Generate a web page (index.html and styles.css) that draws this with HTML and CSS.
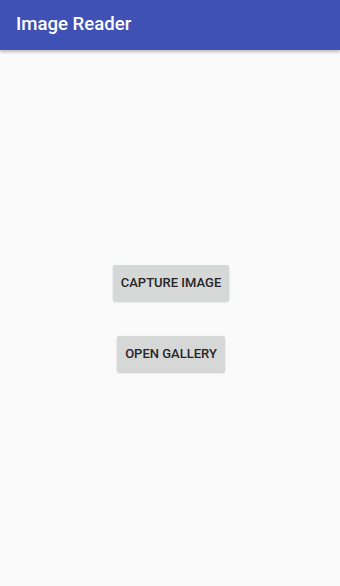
FILE: index.html
```html
<!DOCTYPE html>
<html>
<head>
<meta charset="utf-8">
<link rel="stylesheet" href="styles.css">
</head>
<body>
<div class="app">
  <header class="appbar"><span class="title">Image Reader</span></header>
  <main class="content">
    <button class="btn">CAPTURE IMAGE</button>
    <button class="btn">OPEN GALLERY</button>
  </main>
</div>
</body>
</html>
```
FILE: styles.css
```css
html, body { margin: 0; padding: 0; }
body { background: #fafafa; font-family: Roboto, "Noto Sans", sans-serif; }
.app { width: 340px; height: 586px; display: flex; flex-direction: column; }
.appbar {
  height: 50px; background: #3f51b5; display: flex; align-items: center;
  padding-left: 16px; box-shadow: 0 2px 3px rgba(0,0,0,0.25); position: relative; z-index: 1;
}
.title { color: #fff; font-size: 18.6px; font-weight: 500; margin-top: -2px; }
.content {
  flex: 1; display: flex; flex-direction: column; align-items: center; justify-content: center;
  gap: 35px; padding-left: 2px;
}
.btn {
  height: 36px; padding: 0 8px; border: none; border-radius: 2px; background: #d6d7d7;
  color: #262626; font-family: Roboto, sans-serif; font-size: 13px; font-weight: 500;
  box-shadow: 0 1px 2px rgba(0,0,0,0.2);
}
```
